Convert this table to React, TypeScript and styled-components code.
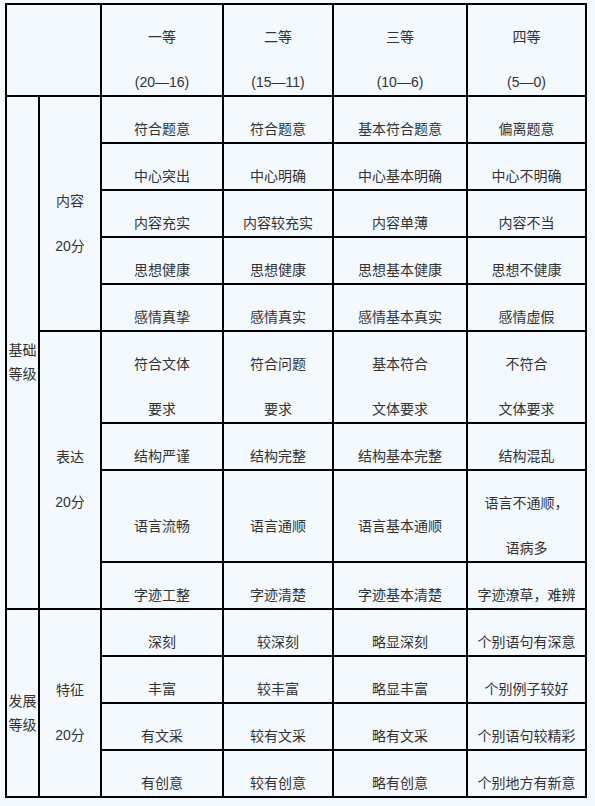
import React from "react";
import styled, { createGlobalStyle } from "styled-components";

const GlobalStyle = createGlobalStyle`
  html, body {
    margin: 0;
    padding: 0;
    background-color: #f4f9fe;
  }
  body {
    font-family: "Liberation Sans", "Noto Sans CJK SC", sans-serif;
    font-size: 14px;
    color: #333;
  }
`;

const Page = styled.div`
  padding: 3px 0 0 5px;
`;

const Table = styled.table`
  border-collapse: collapse;
  table-layout: fixed;
  width: 582px;
  border: 2px solid #000;
`;

const Cell = styled.td`
  border: 2px solid #000;
  padding: 0;
  text-align: center;
  vertical-align: middle;
  font-weight: normal;
`;

// one line of a cell: the text sits low in a 45px slot
const Line = styled.span`
  display: block;
  padding: 20px 0 1px;
  line-height: 24px;
  white-space: nowrap;
`;

// the two stacked labels in the first column share one slot
const GroupLabel = styled.span`
  display: block;
  padding: 20px 0 1px;
  line-height: 24px;
`;

type Text = string | string[];

const grades: string[][] = [
  ["一等", "(20—16)"],
  ["二等", "(15—11)"],
  ["三等", "(10—6)"],
  ["四等", "(5—0)"],
];

const contentRows: Text[][] = [
  ["符合题意", "符合题意", "基本符合题意", "偏离题意"],
  ["中心突出", "中心明确", "中心基本明确", "中心不明确"],
  ["内容充实", "内容较充实", "内容单薄", "内容不当"],
  ["思想健康", "思想健康", "思想基本健康", "思想不健康"],
  ["感情真挚", "感情真实", "感情基本真实", "感情虚假"],
];

const expressionRows: Text[][] = [
  [["符合文体", "要求"], ["符合问题", "要求"], ["基本符合", "文体要求"], ["不符合", "文体要求"]],
  ["结构严谨", "结构完整", "结构基本完整", "结构混乱"],
  ["语言流畅", "语言通顺", "语言基本通顺", ["语言不通顺，", "语病多"]],
  ["字迹工整", "字迹清楚", "字迹基本清楚", "字迹潦草，难辨"],
];

const featureRows: Text[][] = [
  ["深刻", "较深刻", "略显深刻", "个别语句有深意"],
  ["丰富", "较丰富", "略显丰富", "个别例子较好"],
  ["有文采", "较有文采", "略有文采", "个别语句较精彩"],
  ["有创意", "较有创意", "略有创意", "个别地方有新意"],
];

const Lines = ({ text }: { text: Text }) => (
  <>
    {(Array.isArray(text) ? text : [text]).map((t, i) => (
      <Line key={i}>{t}</Line>
    ))}
  </>
);

const GradeCells = ({ row }: { row: Text[] }) => (
  <>
    {row.map((t, i) => (
      <Cell key={i}>
        <Lines text={t} />
      </Cell>
    ))}
  </>
);

export default function App() {
  return (
    <Page>
      <GlobalStyle />
      <Table>
        <colgroup>
          <col style={{ width: 33 }} />
          <col style={{ width: 62 }} />
          <col style={{ width: 122 }} />
          <col style={{ width: 110 }} />
          <col style={{ width: 134 }} />
          <col style={{ width: 119 }} />
        </colgroup>
        <tbody>
          <tr>
            <Cell colSpan={2} />
            {grades.map((g, i) => (
              <Cell key={i}>
                <Lines text={g} />
              </Cell>
            ))}
          </tr>

          {contentRows.map((row, i) => (
            <tr key={`c${i}`}>
              {i === 0 && (
                <Cell rowSpan={contentRows.length + expressionRows.length}>
                  <GroupLabel>
                    基础
                    <br />
                    等级
                  </GroupLabel>
                </Cell>
              )}
              {i === 0 && (
                <Cell rowSpan={contentRows.length}>
                  <Lines text={["内容", "20分"]} />
                </Cell>
              )}
              <GradeCells row={row} />
            </tr>
          ))}

          {expressionRows.map((row, i) => (
            <tr key={`e${i}`}>
              {i === 0 && (
                <Cell rowSpan={expressionRows.length}>
                  <Lines text={["表达", "20分"]} />
                </Cell>
              )}
              <GradeCells row={row} />
            </tr>
          ))}

          {featureRows.map((row, i) => (
            <tr key={`f${i}`}>
              {i === 0 && (
                <Cell rowSpan={featureRows.length}>
                  <GroupLabel>
                    发展
                    <br />
                    等级
                  </GroupLabel>
                </Cell>
              )}
              {i === 0 && (
                <Cell rowSpan={featureRows.length}>
                  <Lines text={["特征", "20分"]} />
                </Cell>
              )}
              <GradeCells row={row} />
            </tr>
          ))}
        </tbody>
      </Table>
    </Page>
  );
}
